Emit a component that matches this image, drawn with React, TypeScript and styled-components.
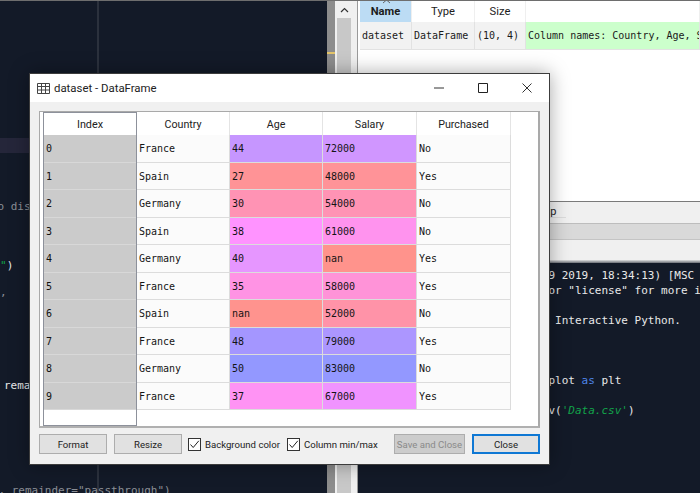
import React from "react";
import styled, { createGlobalStyle } from "styled-components";

const Global = createGlobalStyle`
  html, body { margin: 0; padding: 0; background: #131a28; }
  body { width: 700px; height: 493px; overflow: hidden; position: relative; font-family: Roboto, sans-serif; }
  * { box-sizing: border-box; }
`;

const mono = `"DejaVu Sans Mono", "Liberation Mono", monospace`;
const ui = `Roboto, "Open Sans", sans-serif`;

const Desktop = styled.div`
  width: 700px;
  height: 493px;
  display: grid;
  grid-template-columns: 327px 30px 343px;
  border-top: 1px solid #6e6e6e;
  background: #131a28;
  overflow: hidden;
`;
const Editor = styled.div`
  background: linear-gradient(#2b313d, #2b313d) 97px 0 / 2px 100% no-repeat, #131a28;
  display: flex;
  flex-direction: column;
  padding-top: 137px;
  font: 11px/15px ${mono};
  color: #8b8f96;
  white-space: pre;
  overflow: hidden;
`;
const CurrentLine = styled.div`
  height: 15px;
  flex: none;
  background: #25263a;
`;
const EditorLine = styled.div<{ $top: number; $color?: string; $left?: number }>`
  margin-top: ${(p) => p.$top}px;
  margin-left: ${(p) => p.$left || 0}px;
  height: 15px;
  flex: none;
  color: ${(p) => p.$color || "#8b8f96"};
`;
const GreenText = styled.span`
  color: #12a34a;
`;
const Gutter = styled.div`
  display: flex;
  background: #f0f0f0;
`;
const Track = styled.div`
  width: 8px;
  flex: none;
  background: #8d8d8d;
  display: flex;
  flex-direction: column;
  padding-top: 51px;
`;
const Mark = styled.div`
  height: 2px;
  background: #e3c46a;
`;
const Scroll = styled.div`
  width: 14px;
  flex: none;
  margin-left: 2px;
  background: #c8c8c8;
  display: flex;
  flex-direction: column;
`;
const ScrollUp = styled.div`
  height: 17px;
  background: #f0f0f0;
  display: flex;
  align-items: center;
  justify-content: center;
`;
const Right = styled.div`
  display: flex;
  flex-direction: column;
  background: #fff;
  min-width: 0;
  overflow: hidden;
  padding-left: 2px;
  border-left: 1px solid #9a9a9a;
`;
const VarTable = styled.div`
  height: 200px;
  background: #fff;
  overflow: hidden;
  flex: none;
`;
const VarRow = styled.div<{ $h: number }>`
  display: grid;
  grid-template-columns: 52px 63px 51px 1fr;
  height: ${(p) => p.$h}px;
`;
const VarHead = styled.div<{ $active?: boolean }>`
  background: ${(p) => (p.$active ? "#bcdcf4" : "#fff")};
  border-right: 1px solid #efefef;
  font: ${(p) => (p.$active ? 700 : 400)} 11.2px/21px ${ui};
  color: #1c1c1c;
  text-align: center;
  position: relative;
`;
const SortCaret = styled.svg`
  position: absolute;
  left: 22px;
  top: -2px;
`;
const VarCell = styled.div<{ $green?: boolean }>`
  background: ${(p) => (p.$green ? "#ccffcc" : "#f2f2f2")};
  border-right: 1px solid #e2e2e2;
  border-bottom: 1px solid #e2e2e2;
  font: 10px/27px ${mono};
  color: #1a1a1a;
  padding-left: 2px;
  white-space: pre;
  overflow: hidden;
`;
const PaneTabs = styled.div`
  height: 22px;
  flex: none;
  background: linear-gradient(#dcdcdc, #dcdcdc) 0 15px / 209px 1px no-repeat, #f0f0f0;
  border-top: 1px solid #7a7a7a;
  margin-left: -3px;
  font: 11px/20px ${ui};
  color: #222;
  padding-left: 177px;
`;
const GreyBar = styled.div`
  height: 17px;
  flex: none;
  background: #d9d9d9;
  border-top: 1px solid #bdbdbd;
  border-bottom: 1px solid #c4c4c4;
  margin-left: -3px;
`;
const LightBar = styled.div`
  height: 23px;
  flex: none;
  background: linear-gradient(#f0f0f0 85%, #6a6e76 100%);
  margin-left: -3px;
`;
const Console = styled.div`
  flex: 1;
  background: #131a28;
  margin-left: -3px;
  padding: 5px 0 0 6px;
  font: 11px/15px ${mono};
  color: #e9e9e9;
  white-space: pre;
  overflow: hidden;
`;
const ConsoleLine = styled.div<{ $top?: number }>`
  margin-top: ${(p) => p.$top || 0}px;
  height: 15px;
`;
const Kw = styled.span`
  color: #4f86e8;
`;
const Str = styled.span`
  color: #12a34a;
  font-style: italic;
`;

const Win = styled.div`
  position: absolute;
  left: 29px;
  top: 73px;
  width: 521px;
  height: 392px;
  background: #f0f0f0;
  border: 1px solid #3c3c3c;
  box-shadow: 0 0 18px rgba(0, 0, 0, 0.35);
  display: flex;
  flex-direction: column;
`;
const TitleBar = styled.div`
  height: 28px;
  flex: none;
  background: #fff;
  display: flex;
  align-items: center;
  padding-left: 7px;
`;
const TitleText = styled.div`
  font: 11.4px ${ui};
  color: #222;
  margin-left: 4px;
  flex: 1;
`;
const WinBtn = styled.div`
  width: 44px;
  height: 28px;
  display: flex;
  align-items: center;
  justify-content: center;
`;
const Frame = styled.div`
  margin: 9px 9px 0 9px;
  height: 317px;
  flex: none;
  background: #fff;
  border: 1px solid #a9a9a9;
  border-right: 2px solid #a9a9a9;
  border-bottom: 2px solid #b0b0b0;
  padding-left: 3px;
  display: flex;
  align-items: stretch;
`;
const IndexCol = styled.div`
  width: 94px;
  flex: none;
  border: 1px solid #8d919b;
  background: #fff;
`;
const IndexHead = styled.div`
  height: 22px;
  font: 10.8px/24px ${ui};
  color: #222;
  text-align: center;
`;
const IndexCell = styled.div`
  height: 27.56px;
  background: #cbcbcb;
  border-bottom: 1px solid #d8d8d8;
  font: 10px/28px ${mono};
  color: #111;
  padding-left: 2px;
`;
const Grid = styled.div`
  display: grid;
  grid-template-columns: 93px 93px 94px 94px;
  align-content: start;
`;
const Head = styled.div`
  height: 23px;
  background: #fff;
  border-right: 1px solid #e4e4e4;
  font: 10.7px/25px ${ui};
  color: #222;
  text-align: center;
`;
const Cell = styled.div<{ $bg?: string }>`
  height: 27.56px;
  background: ${(p) => p.$bg || "#fbfbfb"};
  border-right: 1px solid #dcdcdc;
  border-bottom: 1px solid #dcdcdc;
  font: 10px/28px ${mono};
  color: #141414;
  padding-left: 2px;
`;
const Footer = styled.div`
  flex: 1;
  display: flex;
  align-items: flex-start;
  padding: 6px 0 0 9px;
`;
const Btn = styled.div<{ $w: number; $ml?: number; $state?: "off" | "focus" }>`
  width: ${(p) => p.$w}px;
  height: 20px;
  flex: none;
  margin-left: ${(p) => p.$ml || 0}px;
  background: ${(p) => (p.$state === "off" ? "#cccccc" : "#e1e1e1")};
  border: ${(p) => (p.$state === "focus" ? "2px solid #0f78d4" : "1px solid #adadad")};
  font: 9.6px/${(p) => (p.$state === "focus" ? 17 : 19)}px ${ui};
  color: ${(p) => (p.$state === "off" ? "#8a8a8a" : "#1c1c1c")};
  text-align: center;
  white-space: nowrap;
`;
const Check = styled.label<{ $ml: number; $w: number }>`
  display: flex;
  align-items: center;
  height: 20px;
  flex: none;
  margin-left: ${(p) => p.$ml}px;
  width: ${(p) => p.$w}px;
  font: 9.6px ${ui};
  color: #1c1c1c;
  white-space: nowrap;
`;
const Box = styled.span`
  width: 13px;
  height: 13px;
  flex: none;
  border: 1px solid #333;
  background: #fff;
  margin-right: 4px;
  display: flex;
  align-items: center;
  justify-content: center;
`;

const rows: [string, string, string, string, string, string, string][] = [
  ["0", "France", "44", "72000", "No", "#c696ff", "#d096ff"],
  ["1", "Spain", "27", "48000", "Yes", "#ff9396", "#ff9398"],
  ["2", "Germany", "30", "54000", "No", "#ff93b4", "#ff93b4"],
  ["3", "Spain", "38", "61000", "No", "#ff93ff", "#ff93ee"],
  ["4", "Germany", "40", "nan", "Yes", "#e696ff", "#ff938c"],
  ["5", "France", "35", "58000", "Yes", "#ff93e4", "#ff93d8"],
  ["6", "Spain", "nan", "52000", "No", "#ff938e", "#ff93a8"],
  ["7", "France", "48", "79000", "Yes", "#a496ff", "#ac96ff"],
  ["8", "Germany", "50", "83000", "No", "#9398ff", "#9398ff"],
  ["9", "France", "37", "67000", "Yes", "#ff93f4", "#f093ff"],
];

const CheckMark = () => (
  <svg width="11" height="11" viewBox="0 0 11 11">
    <path d="M1.5 5.5 L4.2 8.5 L9.8 1.8" fill="none" stroke="#222" strokeWidth="1" />
  </svg>
);

export default function App() {
  return (
    <>
      <Global />
      <Desktop>
        <Editor>
          <CurrentLine />
          <EditorLine $top={46} $left={-2.5}>{"o display"}</EditorLine>
          <EditorLine $top={44} $color="#e8e8e8">
            <GreenText>{"\""}</GreenText>
            {")"}
          </EditorLine>
          <EditorLine $top={12}>{","}</EditorLine>
          <EditorLine $top={78} $color="#e8e8e8" $left={4}>{"remainder"}</EditorLine>
          <EditorLine $top={90} $left={-1.5}>{", remainder=\"passthrough\")"}</EditorLine>
        </Editor>
        <Gutter>
          <Track>
            <Mark />
          </Track>
          <Scroll>
            <ScrollUp>
              <svg width="9" height="6" viewBox="0 0 9 6">
                <path d="M1 5 L4.5 1.5 L8 5" fill="none" stroke="#333" strokeWidth="1.2" />
              </svg>
            </ScrollUp>
          </Scroll>
        </Gutter>
        <Right>
          <VarTable>
            <VarRow $h={21}>
              <VarHead $active>
                <SortCaret width="9" height="5" viewBox="0 0 9 5">
                  <path d="M1 4 L4.5 1 L8 4" fill="none" stroke="#666" strokeWidth="1" />
                </SortCaret>
                Name
              </VarHead>
              <VarHead>Type</VarHead>
              <VarHead>Size</VarHead>
              <VarHead />
            </VarRow>
            <VarRow $h={28}>
              <VarCell>dataset</VarCell>
              <VarCell>DataFrame</VarCell>
              <VarCell>(10, 4)</VarCell>
              <VarCell $green>Column names: Country, Age, Salary, Purchased</VarCell>
            </VarRow>
          </VarTable>
          <PaneTabs>Help</PaneTabs>
          <GreyBar />
          <LightBar />
          <Console>
            <ConsoleLine>{"Python 3.7.3 (default, Jul  9 2019, 18:34:13) [MSC v.1915"}</ConsoleLine>
            <ConsoleLine>{"Type \"copyright\", \"credits\" or \"license\" for more info"}</ConsoleLine>
            <ConsoleLine $top={15}>{"IPython 7.6.1 -- An enhanced Interactive Python."}</ConsoleLine>
            <ConsoleLine $top={45}>
              {"In [1]: import matplotlib.pyplot "}
              <Kw>as</Kw>
              {" plt"}
            </ConsoleLine>
            <ConsoleLine $top={15}>
              {"In [2]: dataset = pd.read_csv("}
              <Str>'Data.csv'</Str>
              {")"}
            </ConsoleLine>
          </Console>
        </Right>
      </Desktop>
      <Win>
        <TitleBar>
          <svg width="13" height="11" viewBox="0 0 13 11">
            <path d="M0.5 0.5H12.5V10.5H0.5Z M0.5 3.5H12.5 M0.5 7H12.5 M4.5 0.5V10.5 M8.5 0.5V10.5" fill="none" stroke="#444" strokeWidth="1" />
          </svg>
          <TitleText>dataset - DataFrame</TitleText>
          <WinBtn>
            <svg width="10" height="2" viewBox="0 0 10 2">
              <path d="M0 1H10" stroke="#333" strokeWidth="1" />
            </svg>
          </WinBtn>
          <WinBtn>
            <svg width="10" height="10" viewBox="0 0 10 10">
              <path d="M0.5 0.5H9.5V9.5H0.5Z" fill="none" stroke="#222" strokeWidth="1" />
            </svg>
          </WinBtn>
          <WinBtn>
            <svg width="10" height="10" viewBox="0 0 10 10">
              <path d="M0.5 0.5L9.5 9.5M9.5 0.5L0.5 9.5" fill="none" stroke="#333" strokeWidth="1" />
            </svg>
          </WinBtn>
        </TitleBar>
        <Frame>
          <IndexCol>
            <IndexHead>Index</IndexHead>
            {rows.map((r) => (
              <IndexCell key={r[0]}>{r[0]}</IndexCell>
            ))}
          </IndexCol>
          <Grid>
            <Head>Country</Head>
            <Head>Age</Head>
            <Head>Salary</Head>
            <Head>Purchased</Head>
            {rows.map((r) => (
              <React.Fragment key={r[0]}>
                <Cell>{r[1]}</Cell>
                <Cell $bg={r[5]}>{r[2]}</Cell>
                <Cell $bg={r[6]}>{r[3]}</Cell>
                <Cell>{r[4]}</Cell>
              </React.Fragment>
            ))}
          </Grid>
        </Frame>
        <Footer>
          <Btn $w={68}>Format</Btn>
          <Btn $w={68} $ml={7}>Resize</Btn>
          <Check $ml={6} $w={99}>
            <Box><CheckMark /></Box>
            Background color
          </Check>
          <Check $ml={0} $w={107}>
            <Box><CheckMark /></Box>
            Column min/max
          </Check>
          <Btn $w={71} $state="off">Save and Close</Btn>
          <Btn $w={68} $ml={7} $state="focus">Close</Btn>
        </Footer>
      </Win>
    </>
  );
}
